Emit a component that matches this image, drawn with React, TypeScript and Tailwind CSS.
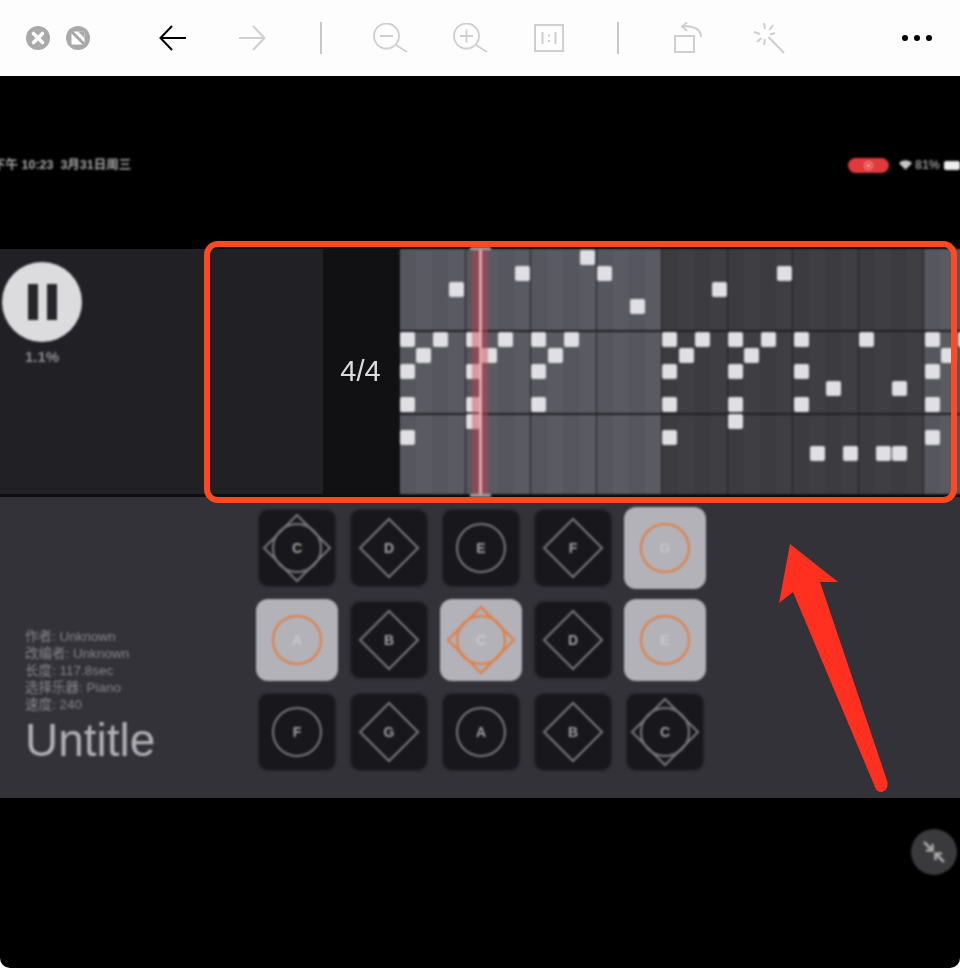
const NOTES: [number, number][] = [
  [0, 5], [0, 7], [0, 9], [0, 11], [1, 6], [2, 5], [3, 2],
  [4, 5], [4, 7], [4, 9], [4, 10], [5, 6], [6, 5], [7, 1],
  [8, 5], [8, 7], [8, 9], [9, 6], [10, 5], [11, 0], [12, 1], [14, 3],
  [16, 5], [16, 7], [16, 9], [16, 11], [17, 6], [18, 5], [19, 2],
  [20, 5], [20, 7], [20, 9], [20, 10], [21, 6], [22, 5], [23, 1],
  [24, 5], [24, 7], [24, 9], [25, 12], [26, 8], [27, 12], [28, 5],
  [29, 12], [30, 8], [30, 12],
  [32, 5], [32, 7], [32, 9], [32, 11], [33, 6], [34, 5],
];

type Shape = "circle" | "diamond" | "both";

const PADS: { note: string; shape: Shape; active?: boolean }[] = [
  { note: "C", shape: "both" },
  { note: "D", shape: "diamond" },
  { note: "E", shape: "circle" },
  { note: "F", shape: "diamond" },
  { note: "G", shape: "circle", active: true },
  { note: "A", shape: "circle", active: true },
  { note: "B", shape: "diamond" },
  { note: "C", shape: "both", active: true },
  { note: "D", shape: "diamond" },
  { note: "E", shape: "circle", active: true },
  { note: "F", shape: "circle" },
  { note: "G", shape: "diamond" },
  { note: "A", shape: "circle" },
  { note: "B", shape: "diamond" },
  { note: "C", shape: "both" },
];

function Pad({ note, shape, active }: { note: string; shape: Shape; active?: boolean }) {
  const stroke = active ? "#e57b3c" : "#7a7a7e";
  const half = shape === "both" ? 33 : 29;
  return (
    <div className="flex h-[92px] w-[92px] items-center justify-center">
      <div
        className={
          active
            ? "relative flex h-[82px] w-[82px] items-center justify-center rounded-[12px] bg-[#b2b2b8]"
            : "relative flex h-[80px] w-[80px] items-center justify-center rounded-[11px] border-2 border-[#2b2b30] bg-[#18181c]"
        }
      >
        <svg viewBox="-40 -40 80 80" className="absolute left-1/2 top-1/2 h-[80px] w-[80px] -translate-x-1/2 -translate-y-1/2" fill="none" stroke={stroke} strokeWidth="2">
          {shape !== "diamond" && <circle r="24" />}
          {shape !== "circle" && <path d={`M0 ${-half}L${half} 0L0 ${half}L${-half} 0Z`} />}
        </svg>
        <span className={active ? "relative text-[14px] font-bold text-[#c6c6cc]" : "relative text-[14px] font-bold text-[#a0a0a4]"}>{note}</span>
      </div>
    </div>
  );
}

function Bar({ dark }: { dark?: boolean }) {
  const a = dark ? "bg-[#3b3b40]" : "bg-[#56565e]";
  const b = dark ? "bg-[#3e3e43]" : "bg-[#5a5a62]";
  return (
    <div className="grid h-full w-[65.5px] shrink-0 grid-cols-4 border-r-[1.5px] border-[#202025]">
      <div className={a} />
      <div className={b} />
      <div className={a} />
      <div className={b} />
    </div>
  );
}

function Toolbar() {
  return (
    <div className="flex h-[76px] shrink-0 items-center bg-[#fdfdfd] text-[#cfcfcf]">
      <svg viewBox="0 0 24 24" className="ml-[26px] h-[24px] w-[24px]">
        <circle cx="12" cy="12" r="12" fill="#a9a9a9" />
        <path d="M7.5 7.5L16.5 16.5M16.5 7.5L7.5 16.5" stroke="#fff" strokeWidth="3.6" strokeLinecap="round" />
      </svg>
      <svg viewBox="0 0 24 24" className="ml-[16px] h-[24px] w-[24px]">
        <circle cx="12" cy="12" r="12" fill="#a9a9a9" />
        <rect x="5.5" y="5.5" width="13" height="13" fill="#fff" />
        <path d="M3.5 3.5L20.5 20.5" stroke="#a9a9a9" strokeWidth="3" />
        <path d="M12 5.5H18.5V12Z" fill="#a9a9a9" />
      </svg>
      <svg viewBox="0 0 28 26" className="ml-[69px] h-[26px] w-[28px]" fill="none" stroke="#000" strokeWidth="2">
        <path d="M27 13H2M13 1L1.5 13L13 25" />
      </svg>
      <svg viewBox="0 0 28 26" className="ml-[51px] h-[26px] w-[28px]" fill="none" stroke="currentColor" strokeWidth="2">
        <path d="M1 13H26M15 1L26.5 13L15 25" />
      </svg>
      <div className="ml-[54px] h-[32px] w-[2px] bg-[#c8c8c8]" />
      <svg viewBox="0 0 36 30" className="ml-[51px] h-[30px] w-[36px]" fill="none" stroke="currentColor" strokeWidth="1.8">
        <circle cx="13.5" cy="13" r="12.5" />
        <path d="M7 13H20M23 22L34 29" />
      </svg>
      <svg viewBox="0 0 36 30" className="ml-[44px] h-[30px] w-[36px]" fill="none" stroke="currentColor" strokeWidth="1.8">
        <circle cx="13.5" cy="13" r="12.5" />
        <path d="M7 13H20M13.5 6.5V19.5M23 22L34 29" />
      </svg>
      <svg viewBox="0 0 30 28" className="ml-[45px] h-[28px] w-[30px]" fill="none" stroke="currentColor" strokeWidth="2">
        <rect x="1" y="1" width="28" height="26" />
        <path d="M8.500 8V20M21.500 8V20" />
        <path d="M15 10.500V12.500M15 16V18" />
      </svg>
      <div className="ml-[53px] h-[32px] w-[2px] bg-[#c8c8c8]" />
      <svg viewBox="0 0 30 32" className="ml-[54px] h-[32px] w-[30px]" fill="none" stroke="currentColor" strokeWidth="2">
        <rect x="2" y="14" width="19" height="16" />
        <path d="M28 15C28 8 22 4 10 4M14 0.500L9 4.500L14 9" />
      </svg>
      <svg viewBox="0 0 32 32" className="ml-[50px] h-[32px] w-[32px]" fill="none" stroke="currentColor" strokeWidth="2">
        <path d="M11 1L12 7M20 3L16.500 8M1 10L7 12M22 11L17 12.500M4 20L8.500 16M11 23L12 17M15.500 15L31 31" />
      </svg>
      <div className="ml-[117px] flex gap-[6px]">
        <div className="h-[6px] w-[6px] rounded-full bg-black" />
        <div className="h-[6px] w-[6px] rounded-full bg-black" />
        <div className="h-[6px] w-[6px] rounded-full bg-black" />
      </div>
    </div>
  );
}

function StatusBar() {
  return (
    <div className="flex h-[173px] shrink-0 items-start justify-between pt-[81px] blur-[0.9px]">
      <div className="-ml-[7px] whitespace-pre text-[12.5px] font-bold leading-[16px] text-[#a8a8a8]">下午 10:23  3月31日周三</div>
      <div className="flex items-center">
        <div className="flex h-[15px] w-[41px] items-center justify-center rounded-full bg-[#e23a3c]">
          <div className="flex h-[9px] w-[9px] items-center justify-center rounded-full border border-[#f2b0b0]">
            <div className="h-[3px] w-[3px] rounded-full bg-[#f6c8c8]" />
          </div>
        </div>
        <svg viewBox="0 0 14 10" className="ml-[10px] h-[10px] w-[13px]" fill="#c8c8c8">
          <path d="M0 3C4 -1 10 -1 14 3L7 10Z" />
        </svg>
        <div className="ml-[3px] text-[12.5px] font-bold leading-[16px] text-[#8c8c8c]">81%</div>
        <div className="ml-[4px] h-[9px] w-[16px] rounded-[2px] bg-[#eeeeee]" />
      </div>
    </div>
  );
}

function TopPanel() {
  return (
    <>
      <div className="flex h-[245px] shrink-0 bg-[#212125]">
        <div className="w-[323px] shrink-0 pl-[2px] pt-[13px] blur-[1.2px]">
          <div className="flex h-[80px] w-[80px] items-center justify-center gap-[9px] rounded-full bg-[#dcdcde]">
            <div className="h-[36px] w-[10px] bg-[#26262a]" />
            <div className="h-[36px] w-[10px] bg-[#26262a]" />
          </div>
          <div className="mt-[6px] w-[80px] text-center text-[15px] font-bold leading-[18px] text-[#8c8c90]">1.1%</div>
        </div>
        <div className="flex w-[77px] shrink-0 items-center justify-center bg-[#111113] pr-[2px]">
          <span className="text-[29px] text-[#dcdcdc] blur-[0.6px]">4/4</span>
        </div>
        <div className="relative flex w-[570px] shrink-0 blur-[0.9px]">
          <Bar />
          <Bar />
          <Bar />
          <Bar />
          <Bar dark />
          <Bar dark />
          <Bar dark />
          <Bar dark />
          <Bar />
          <div className="absolute left-0 right-0 top-[81px] h-[1.5px] bg-[#202025]" />
          <div className="absolute left-0 right-0 top-[164px] h-[1.5px] bg-[#202025]" />
          {NOTES.map(([col, row]) => (
            <div
              key={`${col}-${row}`}
              className="absolute h-[15px] w-[15px] rounded-[2px] bg-[#e0e0e4]"
              style={{ left: col * 16.4, top: row * 16.4 + 0.5 }}
            />
          ))}
          <div className="absolute bottom-0 left-[72px] top-0 w-[16px] bg-[#c8404a]/45" />
          <div className="absolute bottom-0 left-[79px] top-0 w-[3px] bg-[#f0b0b4]/90" />
          <div className="absolute -top-[2px] left-[70px] h-[3px] w-[21px] bg-[#a0a0a0]" />
          <div className="absolute -bottom-[3px] left-[70px] h-[3px] w-[21px] bg-[#a0a0a0]" />
        </div>
      </div>
      <div className="h-[3px] shrink-0 bg-[#0e0e10]" />
    </>
  );
}

function BottomPanel() {
  return (
    <div className="flex h-[301px] shrink-0 bg-[#323238]">
      <div className="w-[251px] shrink-0 pl-[25px] pt-[131px] blur-[0.9px]">
        <div className="text-[13.5px] leading-[17px] text-[#85858a]">
          <div>作者: Unknown</div>
          <div>改编者: Unknown</div>
          <div>长度: 117.8sec</div>
          <div>选择乐器: Piano</div>
          <div>速度: 240</div>
        </div>
        <div className="text-[46px] leading-[54px] text-[#b0b0b5]">Untitle</div>
      </div>
      <div className="grid h-fit grid-cols-[repeat(5,92px)] pt-[5px] blur-[0.9px]">
        {PADS.map((p, i) => (
          <Pad key={i} {...p} />
        ))}
      </div>
    </div>
  );
}

export default function App() {
  return (
    <div className="relative flex h-[968px] w-[960px] flex-col overflow-hidden rounded-b-[10px] bg-black font-['Liberation_Sans','Noto_Sans_CJK_SC',sans-serif]">
      <Toolbar />
      <StatusBar />
      <TopPanel />
      <BottomPanel />
      <div className="flex flex-1 justify-end pr-[3px] pt-[31px]">
        <div className="h-[46px] w-[46px] rounded-full bg-[#3a3a3c] blur-[1px]">
          <svg viewBox="0 0 46 46" className="h-[46px] w-[46px]" fill="none" stroke="#a8a8a8" strokeWidth="2.6">
            <path d="M13 13L22 22M21.500 15V21.500H15" />
            <path d="M33 33L24 24M24.500 31V24.500H31" />
          </svg>
        </div>
      </div>
      {/* annotation drawn over the screenshot */}
      <div className="absolute left-[204px] top-[241px] h-[262px] w-[753px] rounded-[14px] border-[6px] border-[#ff4a1f]" />
      <svg viewBox="0 0 960 968" className="absolute left-0 top-0 h-[968px] w-[960px]">
        <path
          d="M790 544L838 582L820 582L887.500 782Q888.500 790 882 792Q876 792 875 787L793 592L779 603Z"
          fill="#ff3020"
        />
      </svg>
    </div>
  );
}
